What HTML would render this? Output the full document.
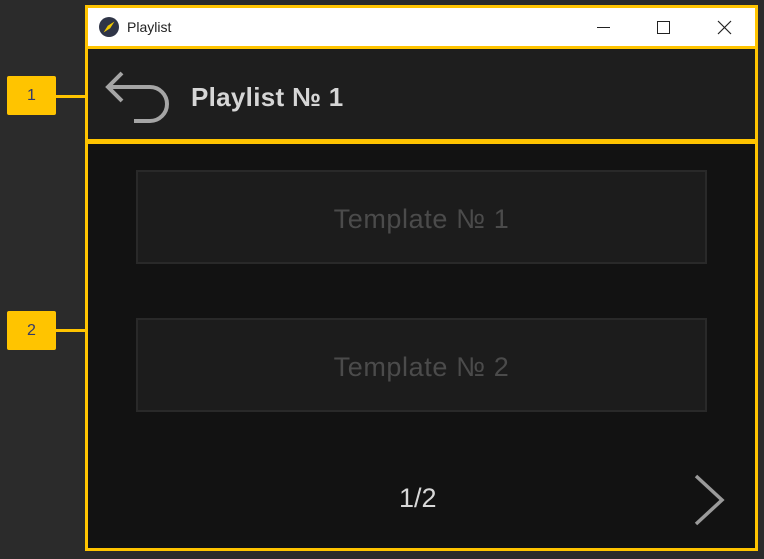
<!DOCTYPE html>
<html><head><meta charset="utf-8"><style>
*{margin:0;padding:0;box-sizing:border-box}
body{width:764px;height:559px;background:#2b2b2b;position:relative;overflow:hidden;font-family:"Segoe UI","Liberation Sans",sans-serif}
.abs{position:absolute}
.y{background:#ffc400}
.tb{left:88px;top:8px;width:667px;height:38px;background:#fff}
.hd{left:88px;top:49px;width:667px;height:90px;background:#1e1e1e}
.ct{left:88px;top:144px;width:667px;height:404px;background:#121212}
.tpl{left:136px;width:571px;height:94px;background:#1c1c1c;border:2px solid #292929;color:#4b4b4b;font-size:27px;letter-spacing:0.6px;display:flex;align-items:center;justify-content:center;padding-top:4px}
.lab{left:7px;width:49px;height:39px;background:#ffc400;border-radius:2px;color:#333a6a;font-size:16px;display:flex;align-items:center;justify-content:center}
</style></head><body>
<div class="abs y" style="left:85px;top:5px;width:673px;height:546px"></div>
<div class="abs tb"></div>
<div class="abs hd"></div>
<div class="abs ct"></div>
<svg class="abs" style="left:98px;top:16px" width="22" height="22" viewBox="0 0 22 22"><circle cx="11" cy="11" r="10" fill="#2f3547"/><path d="M16.5 5.5 L12.2 12.2 L5.5 16.5 L9.8 9.8 Z" fill="#f0c800"/></svg>
<div class="abs" style="left:127px;top:19px;font-size:14px;color:#222">Playlist</div>
<div class="abs" style="left:597px;top:27px;width:13px;height:1px;background:#222"></div>
<div class="abs" style="left:657px;top:21px;width:13px;height:13px;border:1px solid #222"></div>
<svg class="abs" style="left:717px;top:20px" width="15" height="15"><path d="M1 1L14 14M14 1L1 14" stroke="#222" stroke-width="1.2"/></svg>
<svg class="abs" style="left:104px;top:70px" width="70" height="58" viewBox="0 0 70 58"><path d="M4 17 H46 A17 17 0 0 1 46 51 H30" fill="none" stroke="#a5a5a5" stroke-width="4"/><path d="M18 3 L4 17 L18 31" fill="none" stroke="#a5a5a5" stroke-width="4"/></svg>
<div class="abs" style="left:191px;top:82px;font-size:26px;color:#d6d6d6;font-weight:600;letter-spacing:0.3px">Playlist № 1</div>
<div class="abs tpl" style="top:170px">Template № 1</div>
<div class="abs tpl" style="top:318px">Template № 2</div>
<div class="abs" style="left:399px;top:483px;font-size:27px;color:#d8d8d8">1/2</div>
<svg class="abs" style="left:690px;top:472px" width="40" height="56"><path d="M6 4 L32 28 L6 52" fill="none" stroke="#9a9a9a" stroke-width="3.5"/></svg>
<div class="abs lab" style="top:76px">1</div>
<div class="abs y" style="left:55px;top:95px;width:32px;height:3px"></div>
<div class="abs lab" style="top:311px">2</div>
<div class="abs y" style="left:55px;top:329px;width:32px;height:3px"></div>
</body></html>
